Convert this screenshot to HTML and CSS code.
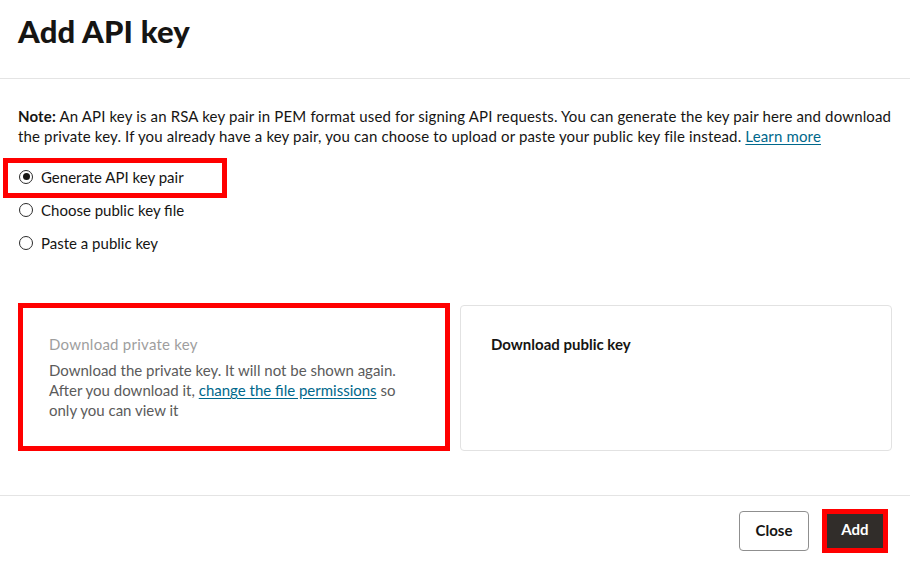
FILE: index.html
```html
<!DOCTYPE html>
<html lang="en">
<head>
<meta charset="utf-8">
<title>Add API key</title>
<link rel="stylesheet" href="styles.css">
</head>
<body>
<div class="dialog">
  <header class="dialog-header">
    <h1 class="dialog-title">Add API key</h1>
  </header>
  <main class="dialog-body">
    <p class="note"><strong>Note:</strong> An API key is an RSA key pair in PEM format used for signing API requests. You can generate the key pair here and download<br>the private key. If you already have a key pair, you can choose to upload or paste your public key file instead. <a href="#" class="link">Learn more</a></p>
    <div class="radio-group">
      <label class="radio-row highlight"><span class="radio checked"></span><span class="radio-label">Generate API key pair</span></label>
      <label class="radio-row"><span class="radio"></span><span class="radio-label">Choose public key file</span></label>
      <label class="radio-row"><span class="radio"></span><span class="radio-label">Paste a public key</span></label>
    </div>
    <div class="cards">
      <div class="card card-private">
        <div class="card-title muted">Download private key</div>
        <div class="card-text">Download the private key. It will not be shown again.<br>After you download it, <a href="#" class="link">change the file permissions</a> so<br>only you can view it</div>
      </div>
      <div class="card card-public">
        <div class="card-title">Download public key</div>
      </div>
    </div>
  </main>
  <footer class="dialog-footer">
    <button class="btn btn-close">Close</button>
    <button class="btn btn-add">Add</button>
  </footer>
</div>
</body>
</html>
```

FILE: styles.css
```css
html, body {
  margin: 0;
  padding: 0;
  background: #ffffff;
}
body {
  font-family: Lato, "Noto Sans", sans-serif;
  color: #161513;
  font-size: 15px;
}
.dialog {
  width: 910px;
  height: 567px;
  display: flex;
  flex-direction: column;
}
.dialog-header {
  box-sizing: border-box;
  height: 79px;
  padding: 13px 18px 0;
  border-bottom: 1px solid #e4e4e4;
}
.dialog-title {
  margin: 0;
  font-size: 31px;
  line-height: 36px;
  font-weight: 900;
  color: #161513;
  letter-spacing: 0.2px;
}
.dialog-body {
  padding: 0 18px;
}
.note {
  margin: 27px 0 0;
  line-height: 20px;
  font-size: 15px;
  color: #161513;
  letter-spacing: 0.15px;
}
.note strong {
  font-weight: 700;
}
.link {
  color: #00688c;
  text-decoration: underline;
  text-underline-offset: 2px;
}
.radio-group {
  margin-top: 14px;
  display: flex;
  flex-direction: column;
}
.radio-row {
  position: relative;
  height: 33px;
  display: flex;
  align-items: center;
  align-self: flex-start;
  cursor: pointer;
}
.highlight::after {
  content: "";
  position: absolute;
  left: -15px;
  top: -2px;
  width: 224px;
  height: 40px;
  box-sizing: border-box;
  border: 5px solid #ff0000;
  pointer-events: none;
}
.radio {
  box-sizing: border-box;
  width: 14px;
  height: 14px;
  margin-left: 1px;
  margin-right: 8px;
  border: 1.5px solid #2b2b2b;
  border-radius: 50%;
  display: flex;
  align-items: center;
  justify-content: center;
}
.radio.checked::before {
  content: "";
  width: 7px;
  height: 7px;
  border-radius: 50%;
  background: #161513;
}
.radio-label {
  font-size: 15px;
  line-height: 20px;
}
.cards {
  margin-top: 44px;
  display: grid;
  grid-template-columns: 1fr 1fr;
  column-gap: 10px;
  align-items: start;
}
.card {
  box-sizing: border-box;
  background: #fff;
}
.card-private {
  height: 148px;
  border: 5px solid #ff0000;
  padding: 26px 26px 0;
}
.card-public {
  margin-top: 2px;
  height: 146px;
  border: 1px solid #e2e2e2;
  border-radius: 4px;
  padding: 28px 30px 0;
}
.card-title {
  font-size: 15px;
  line-height: 20px;
  font-weight: 700;
  color: #161513;
}
.card-title.muted {
  font-weight: 400;
  color: #9e9e9e;
  letter-spacing: 0.25px;
}
.card-text {
  margin-top: 6px;
  font-size: 15px;
  line-height: 20px;
  color: #5b5b5b;
}
.dialog-footer {
  margin-top: 44px;
  border-top: 1px solid #e4e4e4;
  padding: 15px 24px 0 0;
  display: flex;
  justify-content: flex-end;
  align-items: flex-start;
  gap: 15px;
}
.btn {
  box-sizing: border-box;
  height: 40px;
  font-family: Lato, "Noto Sans", sans-serif;
  font-size: 15px;
  font-weight: 700;
  cursor: pointer;
  padding-top: 0;
}
.btn-close {
  width: 70px;
  background: #fff;
  color: #161513;
  border: 1px solid #8f8f8f;
  border-radius: 4px;
  padding-bottom: 2px;
}
.btn-add {
  width: 62px;
  background: #312d2a;
  color: #ffffff;
  border: 3px solid #ff0000;
  border-radius: 0;
  box-shadow: 0 0 0 2px #ff0000;
  padding-bottom: 4px;
}
```
